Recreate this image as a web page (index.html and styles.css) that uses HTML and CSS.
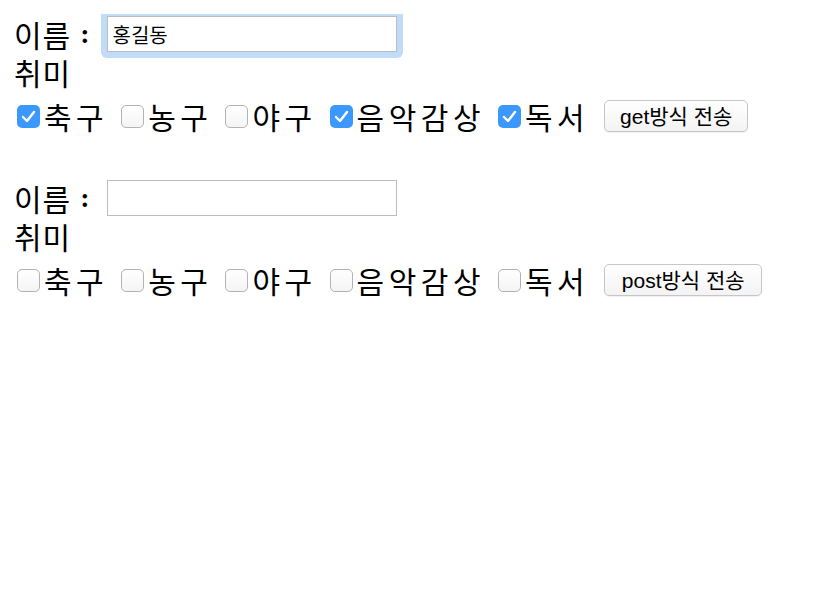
FILE: index.html
```html
<!DOCTYPE html>
<html lang="ko">
<head>
<meta charset="utf-8">
<title>폼 전송</title>
<link rel="stylesheet" href="styles.css">
</head>
<body>
<form class="form" action="#" method="get">
  <div class="row row-name">
    <span class="label">이름</span><span class="colon">:</span>
    <span class="ring"><input class="text-input" type="text" name="name" value="홍길동"></span>
  </div>
  <div class="row row-title"><span class="label">취미</span></div>
  <div class="row row-hobbies">
    <label class="hobby"><span class="box checked"><svg viewBox="0 0 23 23" width="23" height="23"><path d="M6 12 L10 16 L17 7" fill="none" stroke="#fff" stroke-width="2.4" stroke-linecap="round" stroke-linejoin="round"/></svg></span><span class="hobby-text">축구</span></label>
    <label class="hobby"><span class="box"></span><span class="hobby-text">농구</span></label>
    <label class="hobby"><span class="box"></span><span class="hobby-text">야구</span></label>
    <label class="hobby"><span class="box checked"><svg viewBox="0 0 23 23" width="23" height="23"><path d="M6 12 L10 16 L17 7" fill="none" stroke="#fff" stroke-width="2.4" stroke-linecap="round" stroke-linejoin="round"/></svg></span><span class="hobby-text">음악감상</span></label>
    <label class="hobby"><span class="box checked"><svg viewBox="0 0 23 23" width="23" height="23"><path d="M6 12 L10 16 L17 7" fill="none" stroke="#fff" stroke-width="2.4" stroke-linecap="round" stroke-linejoin="round"/></svg></span><span class="hobby-text">독서</span></label>
    <button class="submit get" type="button">get방식 전송</button>
  </div>
</form>
<form class="form" action="#" method="post">
  <div class="row row-name">
    <span class="label">이름</span><span class="colon">:</span>
    <span class="ring plain"><input class="text-input" type="text" name="name" value=""></span>
  </div>
  <div class="row row-title"><span class="label">취미</span></div>
  <div class="row row-hobbies">
    <label class="hobby"><span class="box"></span><span class="hobby-text">축구</span></label>
    <label class="hobby"><span class="box"></span><span class="hobby-text">농구</span></label>
    <label class="hobby"><span class="box"></span><span class="hobby-text">야구</span></label>
    <label class="hobby"><span class="box"></span><span class="hobby-text">음악감상</span></label>
    <label class="hobby"><span class="box"></span><span class="hobby-text">독서</span></label>
    <button class="submit post" type="button">post방식 전송</button>
  </div>
</form>
</body>
</html>
```

FILE: styles.css
```css
html, body {
  background: #fff;
}
body {
  margin: 14px 0 0 14px;
  font-family: "Noto Sans CJK KR", "Noto Sans", sans-serif;
  font-size: 30px;
  color: #000;
}
.form {
  margin: 0 0 36px 0;
}
.row {
  display: flex;
  align-items: center;
}
.row-name {
  height: 40px;
}
.row-title {
  height: 36px;
}
.row-hobbies {
  height: 52px;
}
.label {
  line-height: 1;
  letter-spacing: 1px;
}
.colon {
  line-height: 1;
  font-family: "Liberation Serif", serif;
  font-size: 28px;
  font-weight: bold;
  margin-left: 9px;
}
.ring {
  display: inline-flex;
  margin-left: 11px;
  padding: 6px;
  border-radius: 6px;
  background: #c1dcf9;
}
.ring.plain {
  background: transparent;
}
.text-input {
  box-sizing: border-box;
  width: 290px;
  height: 36px;
  margin: 0;
  padding: 0 5px;
  border: 1px solid #bcbcbc;
  background: #fff;
  font-family: "Noto Sans CJK KR", "Noto Sans", sans-serif;
  font-size: 20px;
  color: #000;
  outline: none;
}
.hobby {
  display: flex;
  align-items: center;
  margin-right: 13px;
}
.hobby:first-child {
  margin-left: 3px;
}
.box {
  box-sizing: border-box;
  width: 23px;
  height: 23px;
  margin-right: 4px;
  border: 1px solid #b3b3b3;
  border-radius: 5px;
  background: linear-gradient(#fff, #f4f4f4);
  display: flex;
}
.box.checked {
  border: none;
  background: #3b98fc;
}
.hobby-text {
  line-height: 1;
  letter-spacing: 4.5px;
}
.submit {
  box-sizing: border-box;
  height: 32px;
  margin: 0 0 0 2px;
  padding: 0;
  border: 1px solid #c6c6c6;
  border-radius: 5px;
  background: linear-gradient(#ffffff, #f3f3f3);
  box-shadow: 0 1px 1px rgba(0,0,0,0.06);
  font-family: "Liberation Sans", "Noto Sans CJK KR", sans-serif;
  font-size: 21px;
  color: #000;
  line-height: 1;
}
.submit.get {
  width: 144px;
}
.submit.post {
  width: 158px;
}
```
